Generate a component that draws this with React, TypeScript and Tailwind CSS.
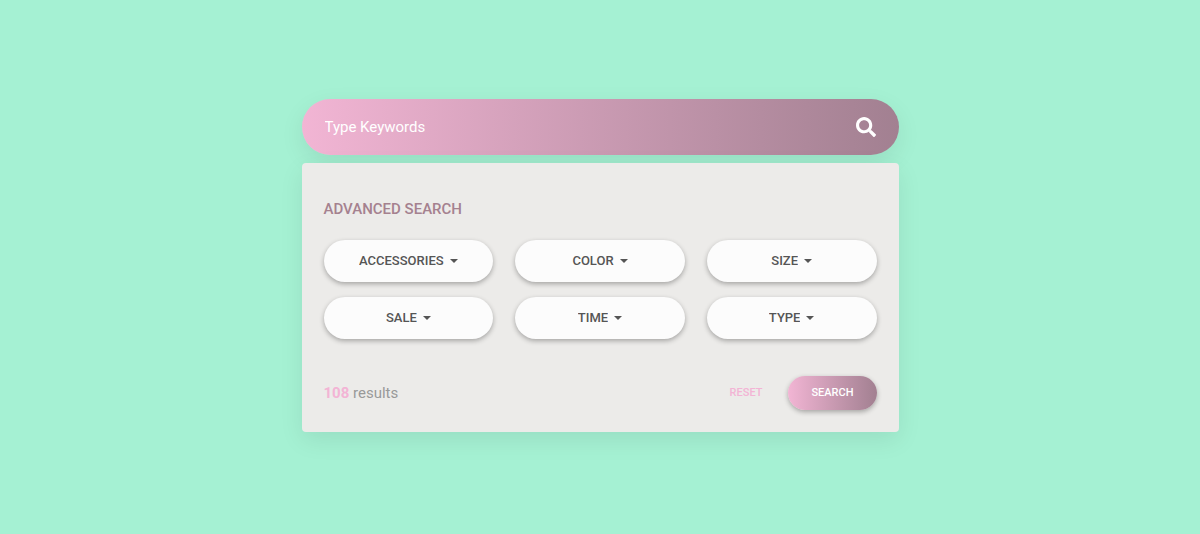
import { useState } from "react";
import type { FormEvent } from "react";

type Filter = { name: string; options: string[] };

const filters: Filter[] = [
  { name: "Accessories", options: ["Accessories"] },
  { name: "Color", options: ["Color"] },
  { name: "Size", options: ["Size"] },
  { name: "Sale", options: ["Sale"] },
  { name: "Time", options: ["Time"] },
  { name: "Type", options: ["Type"] },
];

function SearchIcon() {
  return (
    <svg viewBox="0 0 512 512" className="size-5" fill="currentColor" aria-hidden="true">
      <path d="M505 442.7L405.3 343c-4.500-4.500-10.600-7-17-7H372c27.600-35.300 44-79.700 44-128C416 93.100 322.900 0 208 0S0 93.100 0 208s93.100 208 208 208c48.300 0 92.700-16.400 128-44v16.300c0 6.400 2.500 12.500 7 17l99.700 99.700c9.400 9.400 24.600 9.400 33.900 0l28.300-28.300c9.400-9.400 9.400-24.600.1-34zM208 336c-70.700 0-128-57.200-128-128 0-70.700 57.200-128 128-128 70.700 0 128 57.200 128 128 0 70.700-57.200 128-128 128z" />
    </svg>
  );
}

function FilterSelect({ name, options }: Filter) {
  return (
    <label className="flex h-[42px] items-center justify-center rounded-full bg-[#fcfcfc] shadow-[0_2px_5px_rgba(0,0,0,0.3)]">
      <span className="relative flex items-center">
        <select
          aria-label={name}
          className="cursor-pointer appearance-none field-sizing-content bg-transparent pr-[14px] text-[13px] leading-5 font-medium text-[#555] uppercase outline-none"
        >
          {options.map((option) => (
            <option key={option}>{option}</option>
          ))}
        </select>
        <svg
          viewBox="0 0 8 4"
          className="pointer-events-none absolute right-0 h-1 w-2 fill-[#555]"
          aria-hidden="true"
        >
          <path d="M0 0h8L4 4z" />
        </svg>
      </span>
    </label>
  );
}

export default function App() {
  const [keywords, setKeywords] = useState("");
  const submit = (event: FormEvent) => event.preventDefault();

  return (
    <main className="flex min-h-screen items-center justify-center bg-[#a5f1d3] pb-[3px] font-[Roboto,sans-serif]">
      <form
        onSubmit={submit}
        onReset={() => setKeywords("")}
        className="flex w-full max-w-[597px] flex-col gap-2"
      >
        <div className="flex h-14 items-center rounded-full bg-linear-to-r from-[#f2b5d4] to-[#a28091] px-[23px] text-white shadow-[0_8px_24px_rgba(0,0,0,0.08)]">
          <input
            type="text"
            aria-label="Keywords"
            placeholder="Type Keywords"
            value={keywords}
            onChange={(event) => setKeywords(event.target.value)}
            className="h-full min-w-0 flex-1 bg-transparent text-[15px] text-white outline-none placeholder:text-white"
          />
          <button type="submit" aria-label="Submit keywords" className="cursor-pointer">
            <SearchIcon />
          </button>
        </div>

        <section className="rounded-sm bg-[#ecebe9] px-[22px] pt-[34px] pb-[22px] shadow-[0_8px_24px_rgba(0,0,0,0.08)]">
          <h1 className="text-[15px] leading-6 font-medium text-[#a5818f] uppercase">Advanced Search</h1>
          <div className="mt-[19px] grid grid-cols-3 gap-x-[22px] gap-y-[15px]">
            {filters.map((filter) => (
              <FilterSelect key={filter.name} {...filter} />
            ))}
          </div>
          <div className="mt-[37px] flex items-center justify-between">
            <p className="text-[15px] leading-6 text-[#999]">
              <span className="font-bold text-[#f3b4d5]">108</span> results
            </p>
            <div className="flex items-center gap-[26px] text-[11px] font-medium">
              <button type="reset" className="cursor-pointer text-[#f3b4d5] uppercase">
                Reset
              </button>
              <button
                type="submit"
                className="h-[34px] cursor-pointer rounded-full bg-linear-to-r from-[#f2b5d4] to-[#a28091] px-[23px] text-white uppercase shadow-[0_2px_5px_rgba(0,0,0,0.3)]"
              >
                Search
              </button>
            </div>
          </div>
        </section>
      </form>
    </main>
  );
}
